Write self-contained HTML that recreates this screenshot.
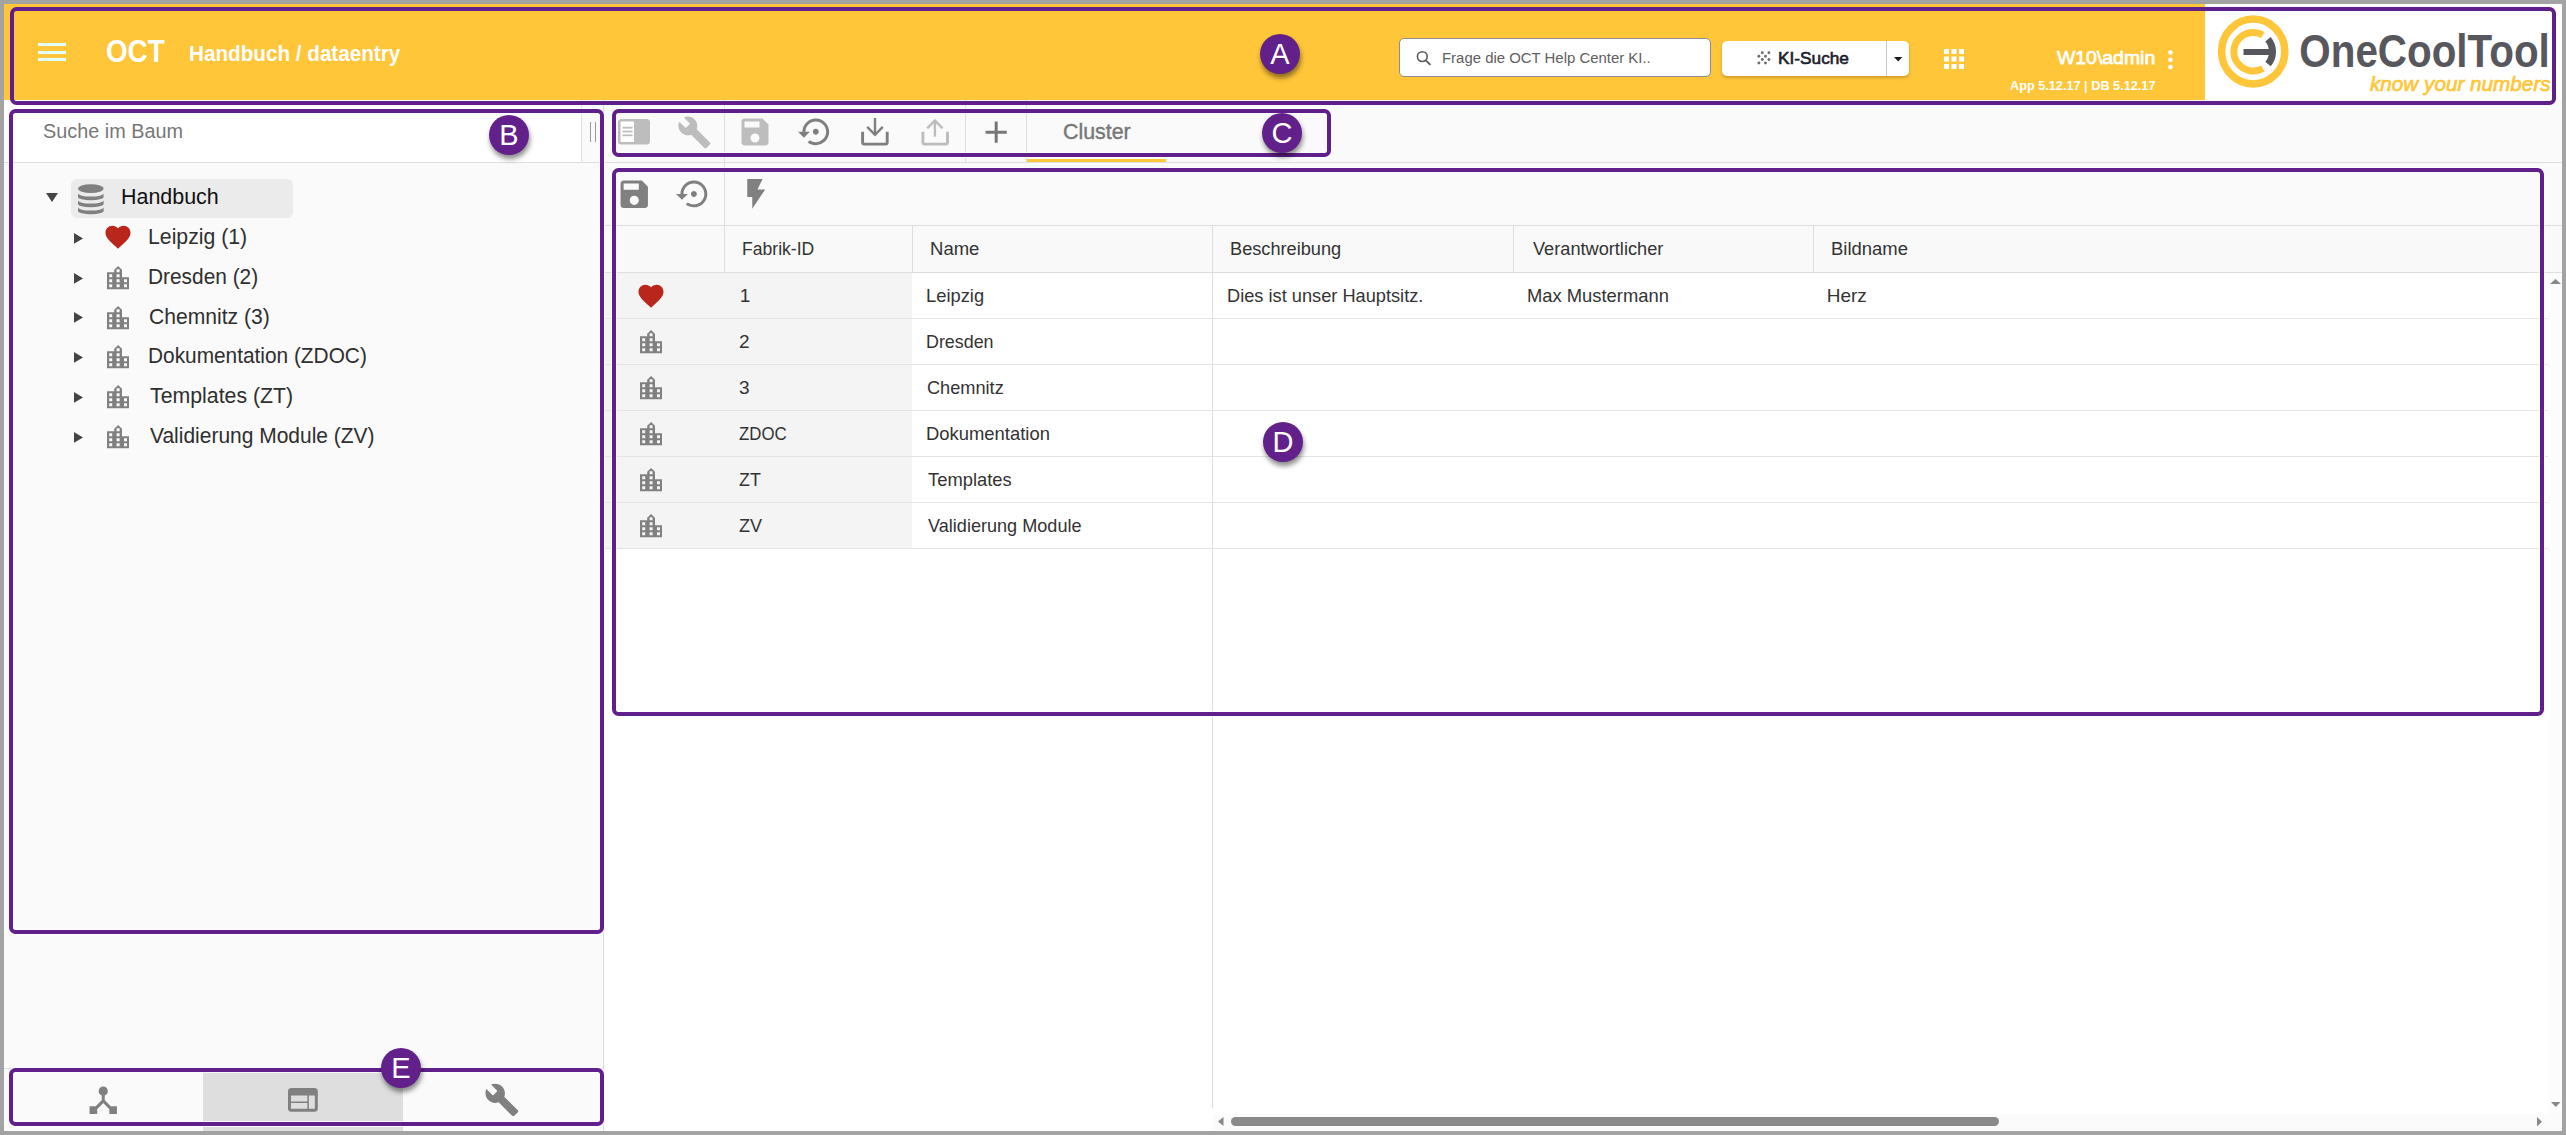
<!DOCTYPE html>
<html><head><meta charset="utf-8">
<style>
html,body{margin:0;padding:0;}
body{width:2566px;height:1135px;position:relative;overflow:hidden;background:#a3a3a3;font-family:"Liberation Sans",sans-serif;}
.a{position:absolute;}
.t{position:absolute;white-space:nowrap;line-height:1;transform-origin:0 0;font-family:"Liberation Sans",sans-serif;}
.hl{position:absolute;height:1px;background:#dedede;}
.vl{position:absolute;width:1px;background:#dedede;}
.box{position:absolute;box-sizing:border-box;border:4px solid #601f8a;border-radius:6.5px;}
.halo{box-shadow:0 0 0 1px rgba(255,255,255,.8), inset 0 0 0 1px rgba(255,255,255,.75);}
.badge{position:absolute;width:40px;height:40px;border-radius:50%;background:#62218a;box-shadow:1px 4px 5px rgba(0,0,0,.45);}
.badge span{position:absolute;left:0;right:0;text-align:center;color:#fff;font-size:29px;line-height:1;top:5.5px;font-family:"Liberation Sans",sans-serif;}
svg{position:absolute;overflow:visible;}
</style></head>
<body>
<!-- app white area -->
<div class="a" style="left:4px;top:4px;width:2558px;height:1127px;background:#fff"></div>

<!-- ================= HEADER ================= -->
<div class="a" style="left:4px;top:4px;width:2201px;height:96px;background:#ffc639"></div>
<div class="a" style="left:2205px;top:4px;width:357px;height:96px;background:#fff"></div>
<!-- hamburger -->
<div class="a" style="left:38px;top:43px;width:28px;height:3px;background:#e0ffff"></div>
<div class="a" style="left:38px;top:50.5px;width:28px;height:3px;background:#e0ffff"></div>
<div class="a" style="left:38px;top:58px;width:28px;height:3px;background:#e0ffff"></div>
<!-- search box -->
<div class="a" style="left:1399px;top:38px;width:312px;height:39px;box-sizing:border-box;border:1px solid #8c8c8c;border-radius:5px;background:#fff"></div>
<svg style="left:0;top:0" width="2566" height="100" viewBox="0 0 2566 100"><circle cx="1422.3" cy="56.6" r="4.9" fill="none" stroke="#5a5a5a" stroke-width="1.6"/><path d="M1425.8 60.3L1430.4 64.9" stroke="#5a5a5a" stroke-width="1.8"/></svg>
<!-- KI-Suche button -->
<div class="a" style="left:1722px;top:41px;width:187px;height:35px;border-radius:5px;background:#fff;box-shadow:0 2px 3px rgba(120,80,0,.35)"></div>
<div class="a" style="left:1886px;top:41px;width:1px;height:35px;background:#c8c8c8"></div>
<svg style="left:1893.8px;top:56.8px" width="8.4" height="4.6" viewBox="0 0 8.4 4.6"><path fill="#1a1a1a" d="M0 0H8.4L4.2 4.6Z"/></svg>
<svg style="left:0;top:0" width="2566" height="100" viewBox="0 0 2566 100"><g fill="#6e6e6e"><circle cx="1762.3" cy="52.8" r="1.45"/><circle cx="1768.9" cy="52.8" r="1.45"/><circle cx="1758.9" cy="56.3" r="1.45"/><circle cx="1765.5" cy="56.3" r="1.45"/><circle cx="1762.3" cy="59.5" r="1.45"/><circle cx="1768.9" cy="59.5" r="1.45"/><circle cx="1758.9" cy="63" r="1.45"/><circle cx="1765.5" cy="63" r="1.45"/></g></svg>
<!-- apps grid -->
<svg style="left:1944px;top:48.5px" width="20" height="20" viewBox="0 0 20 20"><g fill="#fff"><rect x="0" y="0" width="5" height="5"/><rect x="7.5" y="0" width="5" height="5"/><rect x="15" y="0" width="5" height="5"/><rect x="0" y="7.5" width="5" height="5"/><rect x="7.5" y="7.5" width="5" height="5"/><rect x="15" y="7.5" width="5" height="5"/><rect x="0" y="15" width="5" height="5"/><rect x="7.5" y="15" width="5" height="5"/><rect x="15" y="15" width="5" height="5"/></g></svg>
<!-- more vert -->
<svg style="left:2166.3px;top:49.5px" width="9" height="20" viewBox="0 0 9 20"><g fill="#fff"><circle cx="4.5" cy="2.6" r="2.3"/><circle cx="4.5" cy="9.8" r="2.3"/><circle cx="4.5" cy="17" r="2.3"/></g></svg>

<!-- logo -->
<svg style="left:2205px;top:4px" width="357" height="96" viewBox="2205 4 357 96">
  <ellipse cx="2253.2" cy="51.5" rx="31.6" ry="32.5" fill="none" stroke="#ffc639" stroke-width="7.5"/>
  <path d="M2262.85 34.99 A19.3 19.3 0 1 0 2262.85 68.41" fill="none" stroke="#ffc639" stroke-width="7"/>
  <path d="M2267.98 39.29 A19.3 19.3 0 0 1 2267.98 64.11" fill="none" stroke="#57565c" stroke-width="7"/>
  <rect x="2243.5" y="49" width="28" height="6" fill="#57565c"/>
  <text x="2299.3" y="67.4" font-family="Liberation Sans" font-weight="bold" font-size="47" fill="#58575d" textLength="250.5" lengthAdjust="spacingAndGlyphs">OneCoolTool</text>
</svg>

<!-- ================= LEFT PANEL ================= -->
<div class="a" style="left:4px;top:100px;width:599px;height:1031px;background:#fafafa"></div>
<div class="vl" style="left:603px;top:100px;height:1031px;background:#dcdcdc"></div>
<div class="a" style="left:4px;top:100px;width:599px;height:62px;background:#fff"></div>
<div class="hl" style="left:4px;top:162px;width:600px"></div>
<div class="a" style="left:582px;top:100px;width:21px;height:62px;background:#fafafa"></div>
<div class="vl" style="left:581px;top:100px;height:62px"></div>
<div class="a" style="left:589.5px;top:122px;width:1.2px;height:20px;background:#999"></div>
<div class="a" style="left:594.8px;top:122px;width:1.2px;height:20px;background:#999"></div>
<!-- selected root -->
<div class="a" style="left:70.5px;top:178.5px;width:222px;height:39.5px;border-radius:6px;background:#ebebeb"></div>
<svg style="left:46px;top:193px" width="12" height="9" viewBox="0 0 12 9"><path fill="#444" d="M0 0H12L6 9Z"/></svg>
<svg style="left:78px;top:183.5px" width="26" height="31" viewBox="0 0 26 31"><g fill="#808080">
  <ellipse cx="12.8" cy="4.6" rx="12.8" ry="4.3"/>
  <path d="M0 9.3 A12.8 3.3 0 0 0 25.6 9.3 V13 A12.8 3.3 0 0 1 0 13 Z"/>
  <path d="M0 16.3 A12.8 3.3 0 0 0 25.6 16.3 V20 A12.8 3.3 0 0 1 0 20 Z"/>
  <path d="M0 23.3 A12.8 3.3 0 0 0 25.6 23.3 V27 A12.8 3.3 0 0 1 0 27 Z"/>
</g></svg>

<svg style="left:74px;top:232.70px" width="9" height="10.8" viewBox="0 0 9 10.8"><path fill="#444" d="M0 0V10.8L9 5.4Z"/></svg>
<svg style="left:102.9px;top:222px" width="30" height="30" viewBox="0 0 24 24"><path fill="#b9261b" d="M12 21.35l-1.45-1.32C5.4 15.36 2 12.28 2 8.5 2 5.42 4.42 3 7.5 3c1.74 0 3.41.81 4.5 2.09C13.09 3.81 14.76 3 16.5 3 19.58 3 22 5.42 22 8.5c0 3.78-3.4 6.86-8.55 11.54L12 21.35z"/></svg>
<svg style="left:74px;top:272.50px" width="9" height="10.8" viewBox="0 0 9 10.8"><path fill="#444" d="M0 0V10.8L9 5.4Z"/></svg>
<svg style="left:107px;top:265.70px" width="22" height="23.2" viewBox="0 0 22 23.2"><path fill="#808080" fill-rule="evenodd" d="M0 6.3H7.2V3.8L11.1 0L15 3.8V11.3H22V23.2H0ZM2.2 8.3h3v3h-3ZM2.2 13.3h3v3h-3ZM2.2 18.3h3v3h-3ZM9.6 3.2h3v3h-3ZM9.6 8.3h3v3h-3ZM9.6 13.3h3v3h-3ZM9.6 18.3h3v3h-3ZM17 13.3h3v3h-3ZM17 18.3h3v3h-3Z"/></svg>
<svg style="left:74px;top:312.30px" width="9" height="10.8" viewBox="0 0 9 10.8"><path fill="#444" d="M0 0V10.8L9 5.4Z"/></svg>
<svg style="left:107px;top:305.50px" width="22" height="23.2" viewBox="0 0 22 23.2"><path fill="#808080" fill-rule="evenodd" d="M0 6.3H7.2V3.8L11.1 0L15 3.8V11.3H22V23.2H0ZM2.2 8.3h3v3h-3ZM2.2 13.3h3v3h-3ZM2.2 18.3h3v3h-3ZM9.6 3.2h3v3h-3ZM9.6 8.3h3v3h-3ZM9.6 13.3h3v3h-3ZM9.6 18.3h3v3h-3ZM17 13.3h3v3h-3ZM17 18.3h3v3h-3Z"/></svg>
<svg style="left:74px;top:352.10px" width="9" height="10.8" viewBox="0 0 9 10.8"><path fill="#444" d="M0 0V10.8L9 5.4Z"/></svg>
<svg style="left:107px;top:345.30px" width="22" height="23.2" viewBox="0 0 22 23.2"><path fill="#808080" fill-rule="evenodd" d="M0 6.3H7.2V3.8L11.1 0L15 3.8V11.3H22V23.2H0ZM2.2 8.3h3v3h-3ZM2.2 13.3h3v3h-3ZM2.2 18.3h3v3h-3ZM9.6 3.2h3v3h-3ZM9.6 8.3h3v3h-3ZM9.6 13.3h3v3h-3ZM9.6 18.3h3v3h-3ZM17 13.3h3v3h-3ZM17 18.3h3v3h-3Z"/></svg>
<svg style="left:74px;top:391.90px" width="9" height="10.8" viewBox="0 0 9 10.8"><path fill="#444" d="M0 0V10.8L9 5.4Z"/></svg>
<svg style="left:107px;top:385.10px" width="22" height="23.2" viewBox="0 0 22 23.2"><path fill="#808080" fill-rule="evenodd" d="M0 6.3H7.2V3.8L11.1 0L15 3.8V11.3H22V23.2H0ZM2.2 8.3h3v3h-3ZM2.2 13.3h3v3h-3ZM2.2 18.3h3v3h-3ZM9.6 3.2h3v3h-3ZM9.6 8.3h3v3h-3ZM9.6 13.3h3v3h-3ZM9.6 18.3h3v3h-3ZM17 13.3h3v3h-3ZM17 18.3h3v3h-3Z"/></svg>
<svg style="left:74px;top:431.70px" width="9" height="10.8" viewBox="0 0 9 10.8"><path fill="#444" d="M0 0V10.8L9 5.4Z"/></svg>
<svg style="left:107px;top:424.90px" width="22" height="23.2" viewBox="0 0 22 23.2"><path fill="#808080" fill-rule="evenodd" d="M0 6.3H7.2V3.8L11.1 0L15 3.8V11.3H22V23.2H0ZM2.2 8.3h3v3h-3ZM2.2 13.3h3v3h-3ZM2.2 18.3h3v3h-3ZM9.6 3.2h3v3h-3ZM9.6 8.3h3v3h-3ZM9.6 13.3h3v3h-3ZM9.6 18.3h3v3h-3ZM17 13.3h3v3h-3ZM17 18.3h3v3h-3Z"/></svg>

<!-- bottom tabs -->
<div class="hl" style="left:4px;top:1068px;width:599px"></div>
<div class="a" style="left:203px;top:1069px;width:200px;height:62px;background:#dedede"></div>
<svg style="left:84.7px;top:1081.9px" width="36.5" height="36.5" viewBox="0 0 24 24"><path fill="#808080" d="M17 16l-4-4V8.82C14.16 8.4 15 7.3 15 6c0-1.66-1.34-3-3-3S9 4.34 9 6c0 1.3.84 2.4 2 2.82V12l-4 4H3v5h5v-3.05l4-4.2 4 4.2V21h5v-5h-4z"/></svg>
<svg style="left:285px;top:1082.3px" width="35.8" height="35.8" viewBox="0 0 24 24"><path fill="#808080" d="M20 4H4c-1.1 0-1.99.9-1.99 2L2 18c0 1.1.9 2 2 2h16c1.1 0 2-.9 2-2V6c0-1.1-.9-2-2-2zm-5 14H4v-4h11v4zm0-5H4V9h11v4zm5 5h-4V9h4v9z"/></svg>
<svg style="left:484.2px;top:1081.8px" width="35.8" height="35.8" viewBox="0 0 24 24"><path fill="#808080" d="M22.7 19l-9.1-9.1c.9-2.3.4-5-1.5-6.9-2-2-5-2.4-7.4-1.3L9 6 6 9 1.6 4.7C.4 7.1.9 10.1 2.9 12.1c1.900 1.9 4.6 2.4 6.9 1.5l9.1 9.1c.4.4 1 .4 1.4 0l2.3-2.3c.5-.4.5-1.1.1-1.4z"/></svg>

<!-- ================= RIGHT PANEL ================= -->
<div class="a" style="left:604px;top:100px;width:1958px;height:62px;background:#fafafa"></div>
<div class="hl" style="left:604px;top:162px;width:1958px"></div>
<div class="a" style="left:604px;top:163px;width:1958px;height:62px;background:#fafafa"></div>
<div class="hl" style="left:604px;top:225px;width:1958px"></div>
<div class="a" style="left:604px;top:226px;width:1958px;height:46px;background:#f9f9f9"></div>
<div class="hl" style="left:604px;top:272px;width:1958px"></div>
<!-- pinned col bg -->
<div class="a" style="left:604px;top:273px;width:308px;height:276px;background:#f4f4f4"></div>
<div class="hl" style="left:604px;top:318px;width:1944px;background:#e4e4e4"></div>
<div class="hl" style="left:604px;top:364px;width:1944px;background:#e4e4e4"></div>
<div class="hl" style="left:604px;top:410px;width:1944px;background:#e4e4e4"></div>
<div class="hl" style="left:604px;top:456px;width:1944px;background:#e4e4e4"></div>
<div class="hl" style="left:604px;top:502px;width:1944px;background:#e4e4e4"></div>
<div class="hl" style="left:604px;top:548px;width:1944px;background:#e4e4e4"></div>
<!-- vertical lines -->
<div class="vl" style="left:724px;top:100px;height:172px"></div>
<div class="vl" style="left:965px;top:100px;height:62px"></div>
<div class="vl" style="left:1026px;top:100px;height:62px"></div>
<div class="vl" style="left:912px;top:226px;height:46px"></div>
<div class="vl" style="left:1212px;top:226px;height:882px"></div>
<div class="vl" style="left:1513px;top:226px;height:46px"></div>
<div class="vl" style="left:1813px;top:226px;height:46px"></div>
<!-- tab underline -->
<div class="a" style="left:1027px;top:159px;width:139px;height:3px;background:#ffc639"></div>

<!-- toolbar C icons -->
<svg style="left:618px;top:118.5px" width="32" height="25.5" viewBox="0 0 32 25.5"><rect x="0" y="0" width="32" height="25.5" rx="3.5" fill="#bdbdbd"/><rect x="2.5" y="2.5" width="13.5" height="20.5" fill="#fff"/><g fill="#bdbdbd"><rect x="4.5" y="7.8" width="10" height="1.8"/><rect x="4.5" y="11.6" width="10" height="1.8"/><rect x="4.5" y="15.4" width="10" height="1.8"/></g></svg>
<svg style="left:676.5px;top:114.6px" width="34.8" height="34.8" viewBox="0 0 24 24"><path fill="#bdbdbd" d="M22.7 19l-9.1-9.1c.9-2.3.4-5-1.5-6.9-2-2-5-2.4-7.4-1.3L9 6 6 9 1.6 4.7C.4 7.1.9 10.1 2.9 12.1c1.9 1.9 4.6 2.4 6.9 1.5l9.1 9.1c.4.4 1 .4 1.4 0l2.3-2.3c.5-.4.5-1.1.1-1.4z"/></svg>
<svg style="left:736.9px;top:114px" width="36" height="36" viewBox="0 0 24 24"><path fill="#bdbdbd" d="M17 3H5c-1.11 0-2 .9-2 2v14c0 1.1.89 2 2 2h14c1.1 0 2-.9 2-2V7l-4-4zm-5 16c-1.66 0-3-1.34-3-3s1.34-3 3-3 3 1.34 3 3-1.34 3-3 3zm3-10H5V5h10v4z"/></svg>
<svg style="left:797.8px;top:114.2px" width="35.6" height="35.6" viewBox="0 0 24 24"><path fill="#7f7f7f" d="M14 12c0-1.1-.9-2-2-2s-2 .9-2 2 .9 2 2 2 2-.9 2-2zm-2-9c-4.97 0-9 4.03-9 9H0l4 4 4-4H5c0-3.87 3.13-7 7-7s7 3.13 7 7-3.13 7-7 7c-1.51 0-2.91-.49-4.06-1.3l-1.42 1.44C8.04 20.3 9.94 21 12 21c4.97 0 9-4.03 9-9s-4.03-9-9-9z"/></svg>
<svg style="left:0;top:0" width="1100" height="160" viewBox="0 0 1100 160"><g fill="none" stroke-linejoin="miter"><path d="M862.6 131.8V142.3Q862.6 144.1 864.4 144.1H885.4Q887.2 144.1 887.2 142.3V131.8" stroke="#7f7f7f" stroke-width="2.9"/><path d="M875 118V135.2" stroke="#7f7f7f" stroke-width="2.4"/><path d="M867.2 126.9L875 134.8L882.8 126.9" stroke="#7f7f7f" stroke-width="2.4"/><path d="M922.9 131.8V142.3Q922.9 144.1 924.7 144.1H945.7Q947.5 144.1 947.5 142.3V131.8" stroke="#bdbdbd" stroke-width="2.9"/><path d="M934.9 120.5V136.6" stroke="#bdbdbd" stroke-width="2.4"/><path d="M927.2 128.3L934.9 120.4L942.6 128.3" stroke="#bdbdbd" stroke-width="2.4"/></g></svg>

<svg style="left:978.4px;top:113.9px" width="36.4" height="36.4" viewBox="0 0 24 24"><path fill="#777" d="M19 13h-6v6h-2v-6H5v-2h6V5h2v6h6v2z"/></svg>

<!-- toolbar D icons -->
<svg style="left:615.8px;top:175.8px" width="36.5" height="36.5" viewBox="0 0 24 24"><path fill="#808080" d="M17 3H5c-1.11 0-2 .9-2 2v14c0 1.1.89 2 2 2h14c1.1 0 2-.9 2-2V7l-4-4zm-5 16c-1.66 0-3-1.34-3-3s1.34-3 3-3 3 1.34 3 3-1.34 3-3 3zm3-10H5V5h10v4z"/></svg>
<svg style="left:676.2px;top:176px" width="35.8" height="35.8" viewBox="0 0 24 24"><path fill="#808080" d="M14 12c0-1.1-.9-2-2-2s-2 .9-2 2 .9 2 2 2 2-.9 2-2zm-2-9c-4.97 0-9 4.03-9 9H0l4 4 4-4H5c0-3.87 3.13-7 7-7s7 3.13 7 7-3.13 7-7 7c-1.51 0-2.91-.49-4.06-1.3l-1.42 1.44C8.04 20.3 9.94 21 12 21c4.97 0 9-4.03 9-9s-4.03-9-9-9z"/></svg>
<svg style="left:0;top:0" width="2566" height="1135" viewBox="0 0 2566 1135"><path fill="#808080" d="M747.25 179H762.5L757.5 189.4H765.25L752.25 208.75V196.9H747.25Z"/></svg>

<svg style="left:635.75px;top:280.75px" width="30" height="30" viewBox="0 0 24 24"><path fill="#b9261b" d="M12 21.35l-1.45-1.32C5.4 15.36 2 12.28 2 8.5 2 5.42 4.42 3 7.5 3c1.74 0 3.41.81 4.5 2.09C13.09 3.81 14.76 3 16.5 3 19.58 3 22 5.42 22 8.5c0 3.78-3.4 6.86-8.55 11.54L12 21.35z"/></svg>
<svg style="left:640px;top:330.00px" width="22" height="23.2" viewBox="0 0 22 23.2"><path fill="#808080" fill-rule="evenodd" d="M0 6.3H7.2V3.8L11.1 0L15 3.8V11.3H22V23.2H0ZM2.2 8.3h3v3h-3ZM2.2 13.3h3v3h-3ZM2.2 18.3h3v3h-3ZM9.6 3.2h3v3h-3ZM9.6 8.3h3v3h-3ZM9.6 13.3h3v3h-3ZM9.6 18.3h3v3h-3ZM17 13.3h3v3h-3ZM17 18.3h3v3h-3Z"/></svg>
<svg style="left:640px;top:376.00px" width="22" height="23.2" viewBox="0 0 22 23.2"><path fill="#808080" fill-rule="evenodd" d="M0 6.3H7.2V3.8L11.1 0L15 3.8V11.3H22V23.2H0ZM2.2 8.3h3v3h-3ZM2.2 13.3h3v3h-3ZM2.2 18.3h3v3h-3ZM9.6 3.2h3v3h-3ZM9.6 8.3h3v3h-3ZM9.6 13.3h3v3h-3ZM9.6 18.3h3v3h-3ZM17 13.3h3v3h-3ZM17 18.3h3v3h-3Z"/></svg>
<svg style="left:640px;top:422.00px" width="22" height="23.2" viewBox="0 0 22 23.2"><path fill="#808080" fill-rule="evenodd" d="M0 6.3H7.2V3.8L11.1 0L15 3.8V11.3H22V23.2H0ZM2.2 8.3h3v3h-3ZM2.2 13.3h3v3h-3ZM2.2 18.3h3v3h-3ZM9.6 3.2h3v3h-3ZM9.6 8.3h3v3h-3ZM9.6 13.3h3v3h-3ZM9.6 18.3h3v3h-3ZM17 13.3h3v3h-3ZM17 18.3h3v3h-3Z"/></svg>
<svg style="left:640px;top:468.00px" width="22" height="23.2" viewBox="0 0 22 23.2"><path fill="#808080" fill-rule="evenodd" d="M0 6.3H7.2V3.8L11.1 0L15 3.8V11.3H22V23.2H0ZM2.2 8.3h3v3h-3ZM2.2 13.3h3v3h-3ZM2.2 18.3h3v3h-3ZM9.6 3.2h3v3h-3ZM9.6 8.3h3v3h-3ZM9.6 13.3h3v3h-3ZM9.6 18.3h3v3h-3ZM17 13.3h3v3h-3ZM17 18.3h3v3h-3Z"/></svg>
<svg style="left:640px;top:514.00px" width="22" height="23.2" viewBox="0 0 22 23.2"><path fill="#808080" fill-rule="evenodd" d="M0 6.3H7.2V3.8L11.1 0L15 3.8V11.3H22V23.2H0ZM2.2 8.3h3v3h-3ZM2.2 13.3h3v3h-3ZM2.2 18.3h3v3h-3ZM9.6 3.2h3v3h-3ZM9.6 8.3h3v3h-3ZM9.6 13.3h3v3h-3ZM9.6 18.3h3v3h-3ZM17 13.3h3v3h-3ZM17 18.3h3v3h-3Z"/></svg>

<!-- scrollbars -->
<div class="a" style="left:2548px;top:273px;width:14px;height:841px;background:#fcfcfc"></div>
<svg style="left:2550px;top:279px" width="11" height="5" viewBox="0 0 11 5"><path fill="#888" d="M0 5H11L5.5 0Z"/></svg>
<svg style="left:2551px;top:1102px" width="9.5" height="5" viewBox="0 0 9.5 5"><path fill="#888" d="M0 0H9.5L4.75 5Z"/></svg>
<div class="a" style="left:1213px;top:1114px;width:1349px;height:17px;background:#fbfbfb"></div>
<svg style="left:1218px;top:1117px" width="5.5" height="9" viewBox="0 0 5.5 9"><path fill="#888" d="M5.5 0V9L0 4.5Z"/></svg>
<svg style="left:2537px;top:1117px" width="5" height="9.5" viewBox="0 0 5 9.5"><path fill="#888" d="M0 0V9.5L5 4.75Z"/></svg>
<div class="a" style="left:1231px;top:1117px;width:768px;height:9px;border-radius:4.5px;background:#8a8a8a"></div>

<div class='t' style='left:106.03px;top:35.90px;font-size:31.9px;font-weight:bold;font-style:normal;color:#fff;transform:scaleX(0.8712);'>OCT</div>
<div class='t' style='left:189.05px;top:43.00px;font-size:21.7px;font-weight:bold;font-style:normal;color:#fff;transform:scaleX(0.9529);'>Handbuch / dataentry</div>
<div class='t' style='left:1442.44px;top:49.80px;font-size:15.5px;font-weight:normal;font-style:normal;color:#606060;transform:scaleX(0.9628);'>Frage die OCT Help Center KI..</div>
<div class='t' style='left:1777.99px;top:49.80px;font-size:17px;font-weight:normal;font-style:normal;color:#1c1c2c;transform:scaleX(1.0147);-webkit-text-stroke:0.6px #1c1c2c;'>KI-Suche</div>
<div class='t' style='left:2057.40px;top:48.70px;font-size:18.7px;font-weight:normal;font-style:normal;color:#fff;transform:scaleX(1.0387);-webkit-text-stroke:0.75px #fff;'>W10\admin</div>
<div class='t' style='left:2009.70px;top:80.00px;font-size:12.8px;font-weight:bold;font-style:normal;color:#fff;transform:scaleX(0.9925);'>App 5.12.17 | DB 5.12.17</div>
<div class='t' style='left:43.19px;top:122.00px;font-size:19.7px;font-weight:normal;font-style:normal;color:#777;transform:scaleX(1.0073);'>Suche im Baum</div>
<div class='t' style='left:120.72px;top:186.00px;font-size:21.7px;font-weight:normal;font-style:normal;color:#111;transform:scaleX(0.9885);'>Handbuch</div>
<div class='t' style='left:147.74px;top:226.00px;font-size:21.7px;font-weight:normal;font-style:normal;color:#2f2f2f;transform:scaleX(0.9796);'>Leipzig (1)</div>
<div class='t' style='left:147.78px;top:265.80px;font-size:21.7px;font-weight:normal;font-style:normal;color:#2f2f2f;transform:scaleX(0.9622);'>Dresden (2)</div>
<div class='t' style='left:148.73px;top:305.60px;font-size:21.7px;font-weight:normal;font-style:normal;color:#2f2f2f;transform:scaleX(0.9730);'>Chemnitz (3)</div>
<div class='t' style='left:147.78px;top:345.40px;font-size:21.7px;font-weight:normal;font-style:normal;color:#2f2f2f;transform:scaleX(0.9607);'>Dokumentation (ZDOC)</div>
<div class='t' style='left:149.70px;top:385.20px;font-size:21.7px;font-weight:normal;font-style:normal;color:#2f2f2f;transform:scaleX(0.9819);'>Templates (ZT)</div>
<div class='t' style='left:149.70px;top:425.00px;font-size:21.7px;font-weight:normal;font-style:normal;color:#2f2f2f;transform:scaleX(0.9671);'>Validierung Module (ZV)</div>
<div class='t' style='left:1062.63px;top:121.00px;font-size:22px;font-weight:normal;font-style:normal;color:#777;transform:scaleX(0.9721);-webkit-text-stroke:0.4px #777;'>Cluster</div>
<div class='t' style='left:742.32px;top:240.00px;font-size:18.7px;font-weight:normal;font-style:normal;color:#333;transform:scaleX(0.9405);'>Fabrik-ID</div>
<div class='t' style='left:930.22px;top:240.00px;font-size:18.7px;font-weight:normal;font-style:normal;color:#333;transform:scaleX(0.9915);'>Name</div>
<div class='t' style='left:1229.75px;top:240.00px;font-size:18.7px;font-weight:normal;font-style:normal;color:#333;transform:scaleX(0.9730);'>Beschreibung</div>
<div class='t' style='left:1533.10px;top:240.00px;font-size:18.7px;font-weight:normal;font-style:normal;color:#333;transform:scaleX(0.9724);'>Verantwortlicher</div>
<div class='t' style='left:1831.12px;top:240.00px;font-size:18.7px;font-weight:normal;font-style:normal;color:#333;transform:scaleX(0.9880);'>Bildname</div>
<div class='t' style='left:739.70px;top:286.10px;font-size:19px;font-weight:normal;font-style:normal;color:#333;'>1</div>
<div class='t' style='left:926.07px;top:286.10px;font-size:19px;font-weight:normal;font-style:normal;color:#333;transform:scaleX(0.9649);'>Leipzig</div>
<div class='t' style='left:739.00px;top:332.10px;font-size:19px;font-weight:normal;font-style:normal;color:#333;'>2</div>
<div class='t' style='left:926.12px;top:332.10px;font-size:19px;font-weight:normal;font-style:normal;color:#333;transform:scaleX(0.9406);'>Dresden</div>
<div class='t' style='left:739.00px;top:378.10px;font-size:19px;font-weight:normal;font-style:normal;color:#333;'>3</div>
<div class='t' style='left:927.04px;top:378.10px;font-size:19px;font-weight:normal;font-style:normal;color:#333;transform:scaleX(0.9564);'>Chemnitz</div>
<div class='t' style='left:739.12px;top:424.10px;font-size:19px;font-weight:normal;font-style:normal;color:#333;transform:scaleX(0.8846);'>ZDOC</div>
<div class='t' style='left:926.06px;top:424.10px;font-size:19px;font-weight:normal;font-style:normal;color:#333;transform:scaleX(0.9696);'>Dokumentation</div>
<div class='t' style='left:739.06px;top:470.10px;font-size:19px;font-weight:normal;font-style:normal;color:#333;transform:scaleX(0.9409);'>ZT</div>
<div class='t' style='left:928.00px;top:470.10px;font-size:19px;font-weight:normal;font-style:normal;color:#333;transform:scaleX(0.9663);'>Templates</div>
<div class='t' style='left:739.05px;top:516.10px;font-size:19px;font-weight:normal;font-style:normal;color:#333;transform:scaleX(0.9478);'>ZV</div>
<div class='t' style='left:928.00px;top:516.10px;font-size:19px;font-weight:normal;font-style:normal;color:#333;transform:scaleX(0.9522);'>Validierung Module</div>
<div class='t' style='left:1226.78px;top:286.10px;font-size:19px;font-weight:normal;font-style:normal;color:#333;transform:scaleX(0.9587);'>Dies ist unser Hauptsitz.</div>
<div class='t' style='left:1526.97px;top:286.10px;font-size:19px;font-weight:normal;font-style:normal;color:#333;transform:scaleX(0.9667);'>Max Mustermann</div>
<div class='t' style='left:1826.70px;top:286.10px;font-size:19px;font-weight:normal;font-style:normal;color:#333;transform:scaleX(1.0000);'>Herz</div>
<div class='t' style='left:2369.60px;top:73.00px;font-size:21px;font-weight:normal;font-style:italic;color:#ffc639;transform:scaleX(0.9857);-webkit-text-stroke:0.7px #ffc639;'>know your numbers</div>

<!-- ================= ANNOTATION BOXES ================= -->
<div class="box" style="left:10px;top:7px;width:2546px;height:98px"></div>
<div class="box halo" style="left:9px;top:109px;width:595px;height:825px"></div>
<div class="box halo" style="left:612px;top:109px;width:719px;height:48px"></div>
<div class="box halo" style="left:612px;top:168px;width:1932px;height:548px"></div>
<div class="box halo" style="left:9px;top:1068px;width:595px;height:58px"></div>

<div class="badge" style="left:1260px;top:34px"><span>A</span></div>
<div class="badge" style="left:489px;top:115px"><span>B</span></div>
<div class="badge" style="left:1262px;top:113px"><span>C</span></div>
<div class="badge" style="left:1263px;top:422px"><span>D</span></div>
<div class="badge" style="left:381px;top:1048px"><span>E</span></div>

<!-- bottom frame -->
</body></html>
